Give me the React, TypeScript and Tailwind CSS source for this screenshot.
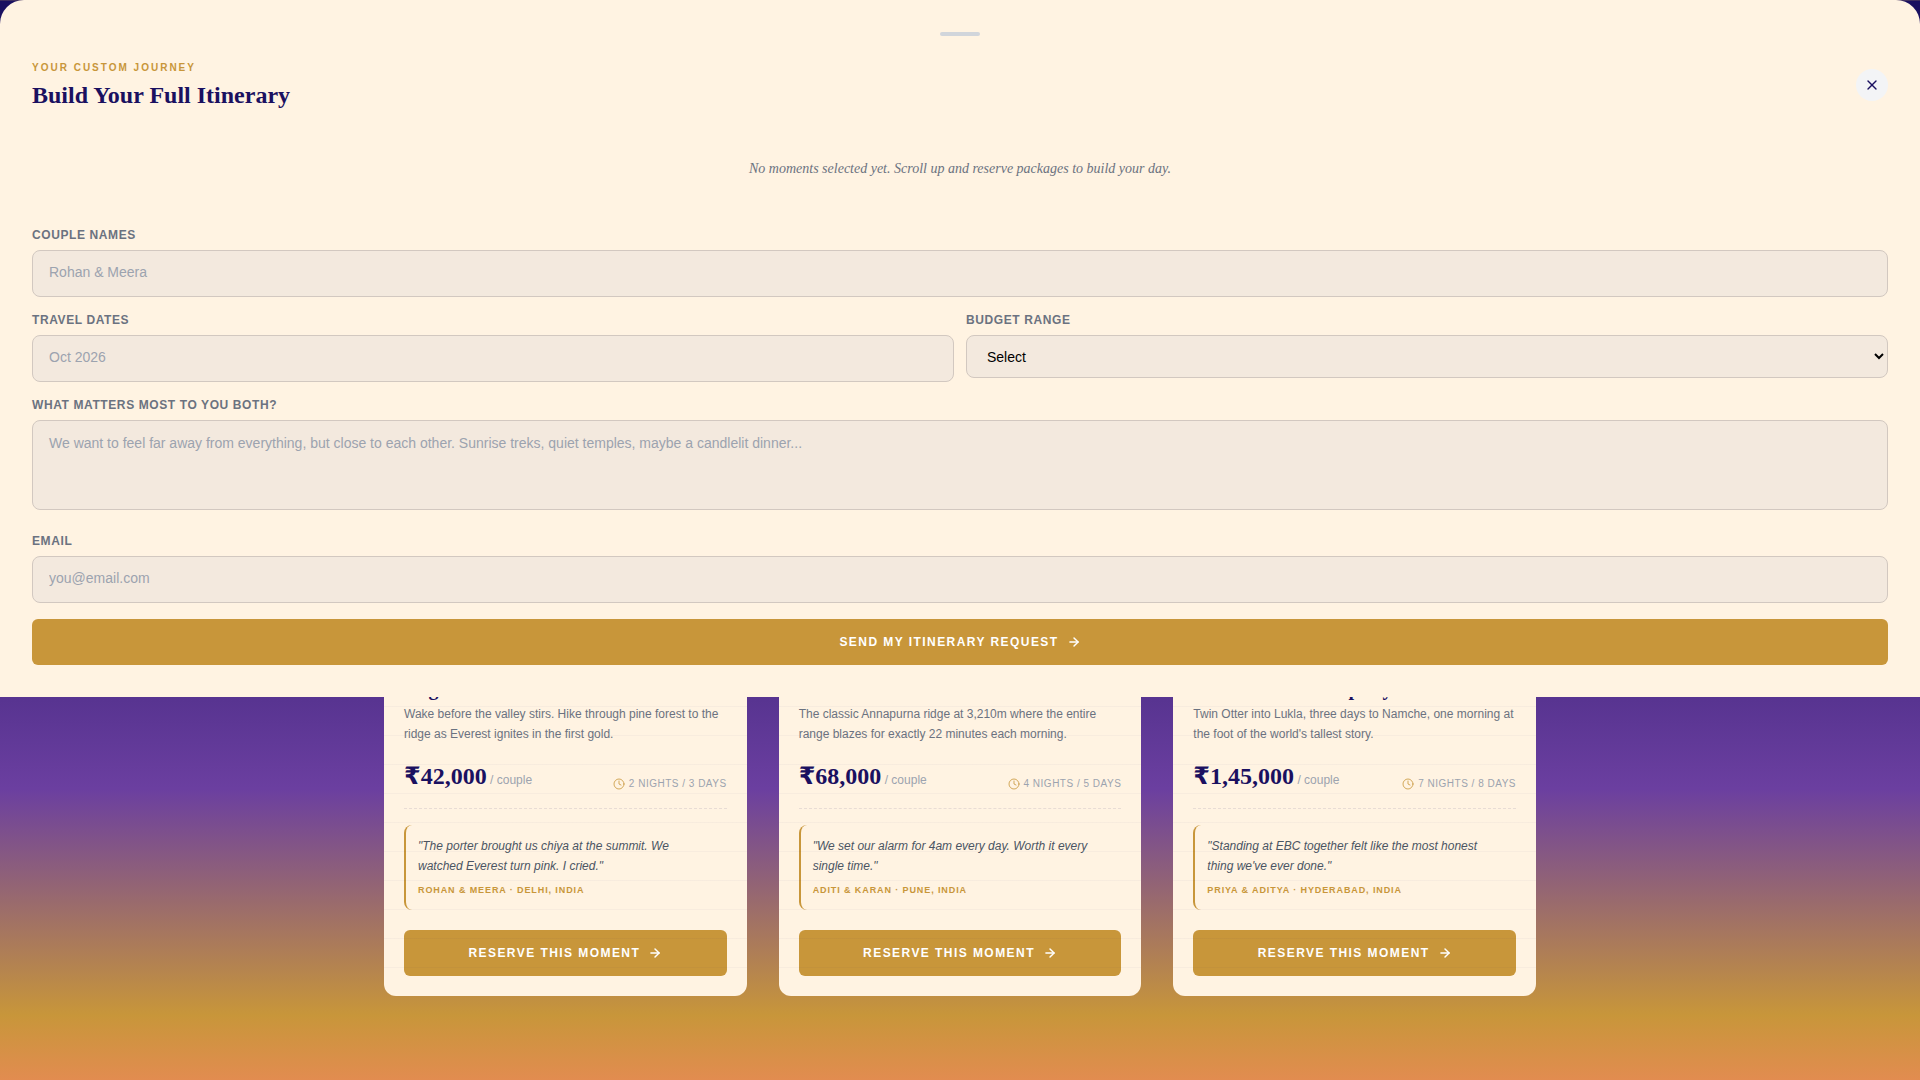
import React, { useState } from "react";
import { ArrowRight, Clock, X } from "lucide-react";

const PACKAGES = [
  {
    title: "Nagarkot Sunrise",
    description:
      "Wake before the valley stirs. Hike through pine forest to the ridge as Everest ignites in the first gold.",
    price: "42,000",
    duration: "2 nights / 3 days",
    quote: "The porter brought us chiya at the summit. We watched Everest turn pink. I cried.",
    author: "Rohan & Meera · Delhi, India",
  },
  {
    title: "Poon Hill Dawn",
    description:
      "The classic Annapurna ridge at 3,210m where the entire range blazes for exactly 22 minutes each morning.",
    price: "68,000",
    duration: "4 nights / 5 days",
    quote: "We set our alarm for 4am every day. Worth it every single time.",
    author: "Aditi & Karan · Pune, India",
  },
  {
    title: "Everest Base Camp Fly-In",
    description:
      "Twin Otter into Lukla, three days to Namche, one morning at the foot of the world's tallest story.",
    price: "1,45,000",
    duration: "7 nights / 8 days",
    quote: "Standing at EBC together felt like the most honest thing we've ever done.",
    author: "Priya & Aditya · Hyderabad, India",
  },
];

const LABEL = "mb-1.5 block text-xs leading-[18px] font-bold tracking-wider text-[#6b7280] uppercase";
const FIELD =
  "block w-full rounded-lg border border-[#d2c8c0] bg-[#f3e9de] px-4 text-sm placeholder:text-[#9ca3af] focus:outline-none";
const INPUT = `${FIELD} h-[47px] pb-1`;
const BUTTON =
  "flex h-[46px] w-full items-center justify-center gap-2 rounded-md bg-[#c8963a] text-xs font-bold tracking-[0.12em] text-white uppercase";

const PackageCard = ({ item }: { item: (typeof PACKAGES)[number] }) => {
  return (
    <article className="relative overflow-hidden rounded-xl bg-[#fff3e2] p-5">
      <h3 className="mb-1 font-['Liberation_Serif',serif] text-xl leading-6 font-bold text-[#1a1060]">
        {item.title}
      </h3>
      <p className="text-xs leading-5 text-[#6b7280]">{item.description}</p>
      <div className="mt-4 flex items-end justify-between">
        <div className="font-['Liberation_Serif',serif] text-2xl leading-8 font-bold text-[#1a1060]">
          <span className="font-['DejaVu_Sans',sans-serif] leading-none">₹</span>
          {item.price}
          <span className="font-['Liberation_Sans',sans-serif] text-xs font-normal text-[#9ca3af]">
            {" "}
            / couple
          </span>
        </div>
        <div className="flex items-center gap-1 text-[10px] leading-4 tracking-[0.5px] text-[#9ca3af] uppercase">
          <Clock size={12} className="text-[#c8963a]/80" />
          {item.duration}
        </div>
      </div>
      <div className="mt-4 mb-4 border-t border-dashed border-[#1a1060]/10" />
      <blockquote className="rounded-lg border-l-2 border-[#c8963a] px-3 pt-[11px] pb-3">
        <p className="text-xs leading-5 text-[#4b5563] italic">"{item.quote}"</p>
        <footer className="mt-1.5 text-[9px] leading-4 font-bold tracking-widest text-[#c8963a] uppercase">
          {item.author}
        </footer>
      </blockquote>
      <button type="button" className={`${BUTTON} mt-5`}>
        Reserve this moment
        <ArrowRight size={14} strokeWidth={2.5} />
      </button>
      {/* ruled paper lines */}
      <div className="pointer-events-none absolute inset-0 bg-[repeating-linear-gradient(to_top,transparent_0px,transparent_28px,rgba(26,16,96,0.03)_28px,rgba(26,16,96,0.03)_29px)]" />
    </article>
  );
};

const ItineraryPanel = ({ onClose }: { onClose: () => void }) => {
  return (
    <div
      role="dialog"
      aria-labelledby="itinerary-title"
      className="absolute inset-x-0 top-0 z-10 rounded-t-3xl bg-[#fff3e2] p-8"
    >
      <div className="mx-auto h-1 w-10 rounded-full bg-[#d1d5db]" />
      <div className="mt-6 flex items-center justify-between">
        <div>
          <p className="text-[10px] leading-4 font-bold tracking-[2px] text-[#c8963a] uppercase">
            Your custom journey
          </p>
          <h2
            id="itinerary-title"
            className="mt-1 font-['Liberation_Serif',serif] text-2xl leading-[30px] font-bold text-[#1a1060]"
          >
            Build Your Full Itinerary
          </h2>
        </div>
        <button
          type="button"
          aria-label="Close"
          onClick={onClose}
          className="flex h-8 w-8 items-center justify-center rounded-full bg-[#f3f4f6] text-[#1a1060]"
        >
          <X size={16} />
        </button>
      </div>

      <p className="mt-[49px] text-center font-['Liberation_Serif',serif] text-sm leading-5 text-[#6b7280] italic">
        No moments selected yet. Scroll up and reserve packages to build your day.
      </p>

      <form className="mt-[47px]" onSubmit={(e) => e.preventDefault()}>
        <div className="flex flex-col gap-3.5">
          <div>
            <label htmlFor="names" className={LABEL}>
              Couple names
            </label>
            <input id="names" type="text" placeholder="Rohan & Meera" className={INPUT} />
          </div>
          <div className="grid grid-cols-2 gap-3">
            <div>
              <label htmlFor="dates" className={LABEL}>
                Travel dates
              </label>
              <input id="dates" type="text" placeholder="Oct 2026" className={INPUT} />
            </div>
            <div>
              <label htmlFor="budget" className={LABEL}>
                Budget range
              </label>
              <select id="budget" className={`${FIELD} h-[43px]`}>
                <option>Select</option>
              </select>
            </div>
          </div>
          <div>
            <label htmlFor="matters" className={LABEL}>
              What matters most to you both?
            </label>
            <textarea
              id="matters"
              placeholder="We want to feel far away from everything, but close to each other. Sunrise treks, quiet temples, maybe a candlelit dinner..."
              className={`${FIELD} h-[90px] resize-none py-3`}
            />
          </div>
          <div className="mt-2">
            <label htmlFor="email" className={LABEL}>
              Email
            </label>
            <input id="email" type="email" placeholder="you@email.com" className={INPUT} />
          </div>
        </div>
        <button type="submit" className={`${BUTTON} mt-4`}>
          Send my itinerary request
          <ArrowRight size={14} strokeWidth={2.5} />
        </button>
      </form>
    </div>
  );
};

const App = () => {
  const [open, setOpen] = useState(true);

  return (
    <div className="relative font-['Liberation_Sans',sans-serif]">
      {open && <ItineraryPanel onClose={() => setOpen(false)} />}
      <main className="flex min-h-screen flex-col justify-end border-t border-[#3f3060] bg-[linear-gradient(180deg,#1a1060_0%,#1a1060_38%,#6b3fa0_73%,#c8963a_94%,#e28c50_100%)] px-6 pb-[84px]">
        <div className="mx-auto grid w-full max-w-6xl grid-cols-3 gap-8">
          {PACKAGES.map((item) => (
            <PackageCard key={item.title} item={item} />
          ))}
        </div>
      </main>
    </div>
  );
};

export default App;
